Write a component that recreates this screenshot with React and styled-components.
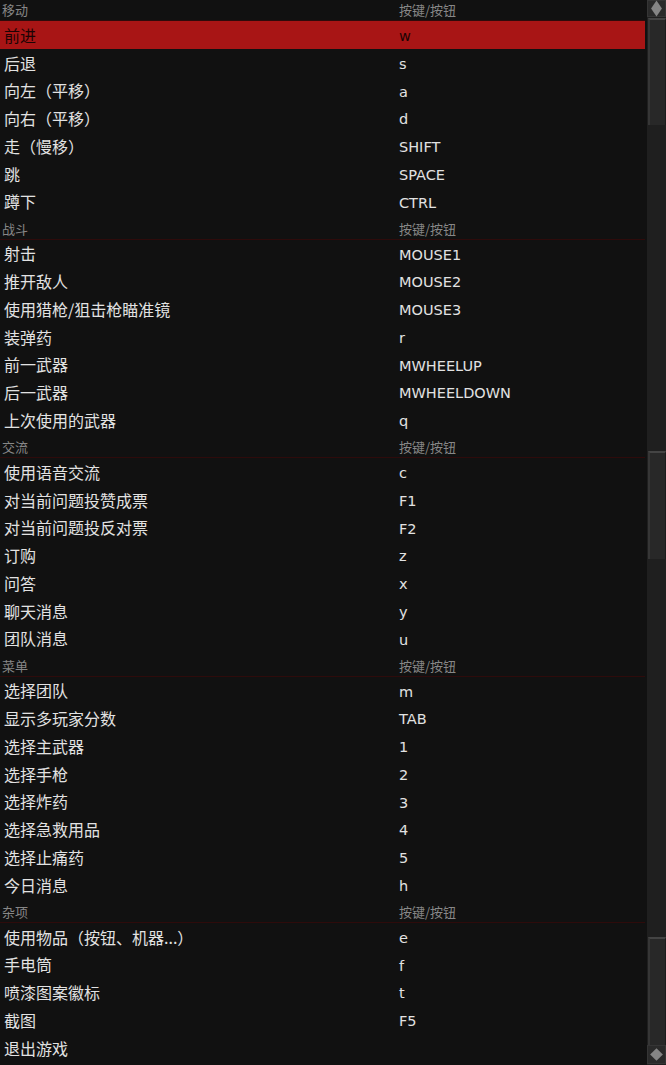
import React from "react";
import styled, { createGlobalStyle } from "styled-components";

const Global = createGlobalStyle`
  html, body { margin: 0; padding: 0; background: #111111; overflow: hidden; }
  #root { width: 666px; height: 1065px; }
`;

const sections = [
  { title: "移动", rows: [["前进", "w"], ["后退", "s"], ["向左（平移）", "a"], ["向右（平移）", "d"], ["走（慢移）", "SHIFT"], ["跳", "SPACE"], ["蹲下", "CTRL"]] },
  { title: "战斗", rows: [["射击", "MOUSE1"], ["推开敌人", "MOUSE2"], ["使用猎枪/狙击枪瞄准镜", "MOUSE3"], ["装弹药", "r"], ["前一武器", "MWHEELUP"], ["后一武器", "MWHEELDOWN"], ["上次使用的武器", "q"]] },
  { title: "交流", rows: [["使用语音交流", "c"], ["对当前问题投赞成票", "F1"], ["对当前问题投反对票", "F2"], ["订购", "z"], ["问答", "x"], ["聊天消息", "y"], ["团队消息", "u"]] },
  { title: "菜单", rows: [["选择团队", "m"], ["显示多玩家分数", "TAB"], ["选择主武器", "1"], ["选择手枪", "2"], ["选择炸药", "3"], ["选择急救用品", "4"], ["选择止痛药", "5"], ["今日消息", "h"]] },
  { title: "杂项", rows: [["使用物品（按钮、机器...）", "e"], ["手电筒", "f"], ["喷漆图案徽标", "t"], ["截图", "F5"], ["退出游戏", ""]] },
];

const Page = styled.div`
  display: flex;
  width: 666px;
  height: 1065px;
  overflow: hidden;
  background: #111111;
`;

const List = styled.div`
  flex: 1;
  display: flex;
  flex-direction: column;
  margin-top: -3.25px;
  padding-right: 1px;
`;

const Header = styled.div`
  display: grid;
  grid-template-columns: 399px 1fr;
  flex: none;
  height: 24.25px;
  box-sizing: border-box;
  padding-bottom: 2px;
  border-bottom: 1px solid #2e0b0b;
  align-items: end;
  font-family: "Noto Sans CJK SC", sans-serif;
  font-size: 13px;
  line-height: 16px;
  color: #878787;
`;

const HeaderLabel = styled.span`
  padding-left: 2px;
`;

const Row = styled.div`
  display: grid;
  grid-template-columns: 399px 1fr;
  flex: none;
  height: 27.75px;
  align-items: center;
  background: ${(p) => (p.$active ? "#a81515" : "transparent")};
  color: ${(p) => (p.$active ? "#1c0404" : "#e2e2e2")};
`;

const Label = styled.span`
  padding-left: 4px;
  font-family: "Noto Sans CJK SC", sans-serif;
  font-size: 16px;
  line-height: 1;
`;

const Key = styled.span`
  padding-top: 3px;
  font-family: "DejaVu Sans", "Noto Sans CJK SC", sans-serif;
  font-size: 14.5px;
  line-height: 1;
`;

const Scrollbar = styled.div`
  width: 19px;
  margin-left: 1px;
  display: flex;
  flex-direction: column;
  background: #1f1f1f;
`;

const ArrowButton = styled.div`
  height: ${(p) => p.$h}px;
  background: #2a2a2a;
  border: 1px solid #353535;
  box-sizing: border-box;
  display: flex;
  align-items: center;
  justify-content: center;
`;

const Diamond = styled.div`
  width: 9px;
  height: 9px;
  background: #858585;
  transform: ${(p) => (p.$tall ? "scale(0.85, 1.25) rotate(45deg)" : "rotate(45deg)")};
`;

const Track = styled.div`
  height: ${(p) => p.$h}px;
  background: #1f1f1f;
`;

const Thumb = styled.div`
  height: ${(p) => p.$h}px;
  background: #282828;
  border-top: 2px solid #444444;
  border-left: 2px solid #363636;
  border-right: 1px solid #1c1c1c;
  box-sizing: border-box;
  margin: 1px 0 0 1px;
`;

export default function App() {
  return (
    <>
      <Global />
      <Page>
        <List>
          {sections.map((s, si) => (
            <React.Fragment key={s.title}>
              <Header>
                <HeaderLabel>{s.title}</HeaderLabel>
                <span>按键/按钮</span>
              </Header>
              {s.rows.map(([label, key], ri) => (
                <Row key={label} $active={si === 0 && ri === 0}>
                  <Label>{label}</Label>
                  <Key>{key}</Key>
                </Row>
              ))}
            </React.Fragment>
          ))}
        </List>
        <Scrollbar>
          <ArrowButton $h={17}><Diamond $tall /></ArrowButton>
          <Thumb $h={107} />
          <Track $h={325} />
          <Thumb $h={108} />
          <Track $h={377} />
          <Thumb $h={108} />
          <ArrowButton $h={19}><Diamond /></ArrowButton>
        </Scrollbar>
      </Page>
    </>
  );
}
